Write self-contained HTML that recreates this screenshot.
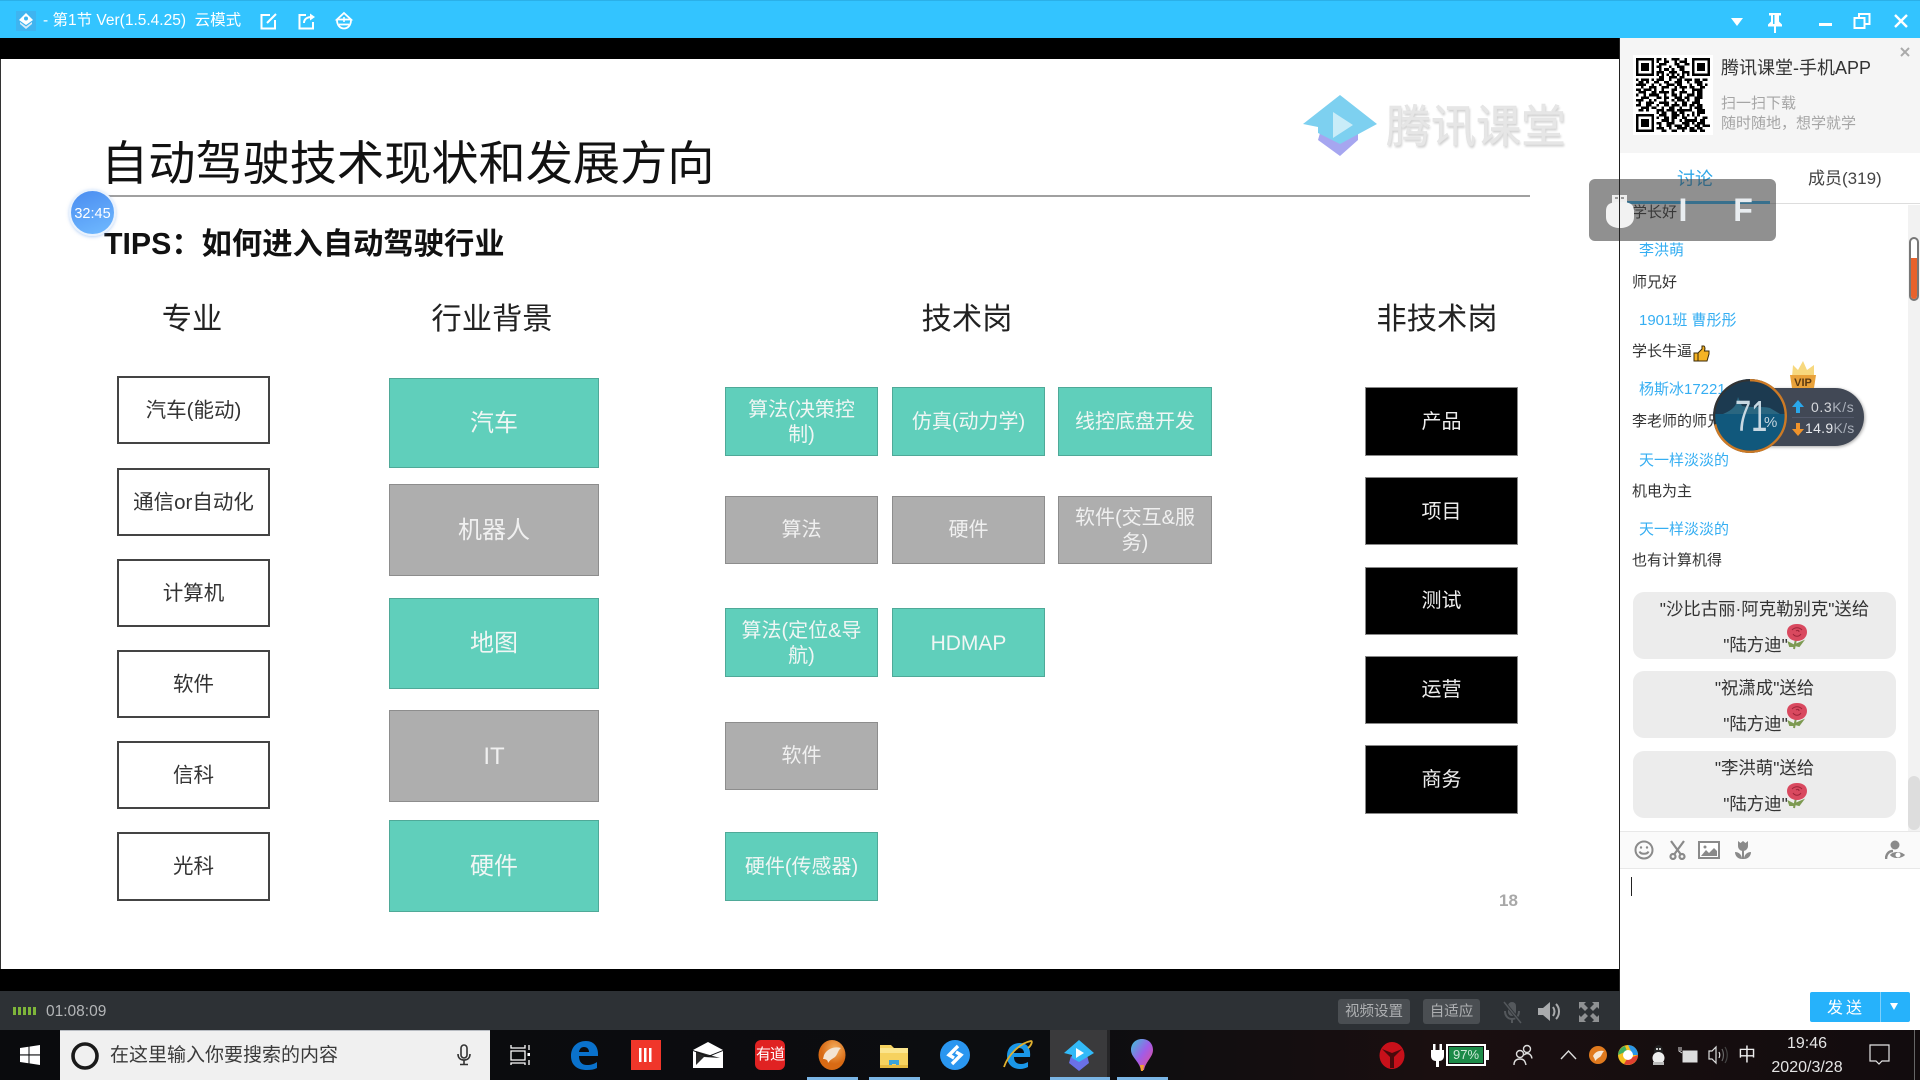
<!DOCTYPE html>
<html lang="zh-CN"><head><meta charset="utf-8"><title>第1节</title>
<style>
html,body{margin:0;padding:0;width:1920px;height:1080px;overflow:hidden;background:#fff}
body{position:relative;font-family:"Liberation Sans","Noto Sans CJK SC",sans-serif}
div,span,svg{position:absolute;box-sizing:border-box}
.n{white-space:nowrap}
.b{display:flex;align-items:center;justify-content:center;text-align:center;font-size:20px;line-height:25px}
.w{background:#fff;border:2px solid #444;color:#333;font-size:20.500px}
.g{background:#60cfbb;border:1px solid #4fa998;color:#f0f6f4;padding-top:2px}
.h{background:#aeaeae;border:1px solid #8d8d8d;color:#f0f0f0;padding-top:1px}
.k{background:#000;border:1px solid #888;color:#eee;padding-top:1px}
.l{font-size:24px;padding-top:0}
.c{font-size:30.300px;color:#222;line-height:40px;top:300px;text-align:center;white-space:nowrap}
.nm{left:1639px;font-size:15px;line-height:20px;color:#35aef2;white-space:nowrap}
.tx{left:1632px;font-size:15px;line-height:20px;color:#333;white-space:nowrap}
.gf{left:1633px;width:263px;height:67px;background:#ececec;border-radius:11px}
.gt{left:0;width:263px;text-align:center;font-size:17.400px;line-height:24px;color:#333;white-space:nowrap}
.ul{top:1077px;height:3px;background:#7ab5e5}
</style></head><body>

<!-- title bar -->
<div style="left:0;top:0;width:1920px;height:38px;background:#33c4ff;border-top:1px solid #2bb0e8"></div>
<svg style="left:16px;top:11px" width="20" height="20" viewBox="0 0 20 20"><rect width="20" height="20" fill="#3fb4f0"/><path d="M10 2l7 7-7 5-7-5z" fill="#fff"/><path d="M4 11l6 4.500 6-4.500v2l-6 5-6-5z" fill="#d8ecf8"/><circle cx="10" cy="7.500" r="2" fill="#3fb4f0"/></svg>
<div class="n" style="left:43px;top:11px;font-size:15.500px;line-height:20px;color:#fff">- 第1节 Ver(1.5.4.25)&nbsp; 云模式</div>
<svg style="left:259px;top:11px" width="20" height="20" viewBox="0 0 20 20" fill="none" stroke="#fff" stroke-width="2"><path d="M11 4H2.500v13.500H16V9"/><path d="M8 12l9-9" stroke-width="2"/></svg>
<svg style="left:297px;top:11px" width="20" height="20" viewBox="0 0 20 20" fill="none" stroke="#fff" stroke-width="2"><path d="M9 4H2.500v13.500H16V11"/><path d="M7 12c0-4 3-6 8-6" /><path d="M13 2.500l5 3.500-5 3.500z" fill="#fff" stroke="none"/></svg>
<svg style="left:334px;top:11px" width="20" height="20" viewBox="0 0 20 20" fill="none" stroke="#fff" stroke-width="1.800"><path d="M10 2l7 6.500H3z"/><path d="M3 9c0 5 3 8.500 7 8.500s7-3.500 7-8.500"/><path d="M5 13.500h10"/><path d="M10 6v5M7.500 8.500h5" stroke-width="1.500"/></svg>
<svg style="left:1729px;top:16px" width="16" height="12" viewBox="0 0 16 12"><path d="M2 2h12l-6 8z" fill="#fff"/></svg>
<svg style="left:1765px;top:11px" width="20" height="24" viewBox="0 0 20 24" fill="#fff"><path d="M4 2h12v2.500h-2v6l3 3v2H3v-2l3-3v-6H4z"/><rect x="9" y="15" width="2" height="7"/><rect x="8" y="4" width="1.500" height="9" fill="#33c4ff"/></svg>
<div style="left:1819px;top:23px;width:13px;height:3px;background:#fff"></div>
<svg style="left:1853px;top:12px" width="18" height="18" viewBox="0 0 18 18" fill="none" stroke="#fff" stroke-width="2"><rect x="1.500" y="6" width="10" height="10"/><path d="M6 6V2h10.500v10H12"/></svg>
<svg style="left:1894px;top:14px" width="14" height="14" viewBox="0 0 14 14" stroke="#fff" stroke-width="2.400"><path d="M1 1l12 12M13 1L1 13"/></svg>

<!-- black bands -->
<div style="left:0;top:38px;width:1620px;height:21px;background:#000"></div>
<div style="left:0;top:969px;width:1620px;height:22px;background:#000"></div>
<div style="left:0;top:59px;width:1px;height:910px;background:#333"></div>

<!-- slide -->
<div style="left:0;top:0;width:1619px;height:969px;filter:blur(.35px)">
<div class="n" style="left:101px;top:132px;font-size:47.200px;line-height:66px;color:#111">自动驾驶技术现状和发展方向</div>
<div style="left:104px;top:195px;width:1426px;height:2px;background:#a0a0a0"></div>
<div class="n" style="left:104px;top:223px;font-size:30.300px;line-height:44px;font-weight:700;color:#111">TIPS：如何进入自动驾驶行业</div>

<!-- watermark -->
<svg style="left:1302px;top:94px" width="76" height="64" viewBox="0 0 76 64"><path d="M38 62L16 46l4-14 18 10 18-12v16z" fill="#a6a6f0"/><path d="M38 1l37 29-37 20-22-11v-6L1 30z" fill="#7dd0f0"/><path d="M31 18l20 13-20 13z" fill="#c9ecf8"/></svg>
<div class="n" style="left:1386px;top:94px;font-size:45px;line-height:66px;color:#e6e6e6;-webkit-text-stroke:.4px #e2e2e2;text-shadow:1px 2px 2px #cfcfcf">腾讯课堂</div>

<!-- headers -->
<div class="c" style="left:92px;width:200px">专业</div>
<div class="c" style="left:392px;width:200px">行业背景</div>
<div class="c" style="left:867px;width:200px">技术岗</div>
<div class="c" style="left:1337px;width:200px">非技术岗</div>

<!-- col1 -->
<div class="b w" style="left:117px;top:376px;width:153px;height:68px">汽车(能动)</div>
<div class="b w" style="left:117px;top:468px;width:153px;height:68px">通信or自动化</div>
<div class="b w" style="left:117px;top:559px;width:153px;height:68px">计算机</div>
<div class="b w" style="left:117px;top:650px;width:153px;height:68px">软件</div>
<div class="b w" style="left:117px;top:741px;width:153px;height:68px">信科</div>
<div class="b w" style="left:117px;top:832px;width:153px;height:69px">光科</div>

<!-- col2 -->
<div class="b g l" style="left:389px;top:378px;width:210px;height:90px">汽车</div>
<div class="b h l" style="left:389px;top:484px;width:210px;height:92px">机器人</div>
<div class="b g l" style="left:389px;top:598px;width:210px;height:91px">地图</div>
<div class="b h l" style="left:389px;top:710px;width:210px;height:92px">IT</div>
<div class="b g l" style="left:389px;top:820px;width:210px;height:92px">硬件</div>

<!-- col3 -->
<div class="b g" style="left:725px;top:387px;width:153px;height:69px;padding-left:12px;padding-right:12px">算法(决策控制)</div>
<div class="b g" style="left:892px;top:387px;width:153px;height:69px">仿真(动力学)</div>
<div class="b g" style="left:1058px;top:387px;width:154px;height:69px">线控底盘开发</div>
<div class="b h" style="left:725px;top:496px;width:153px;height:68px">算法</div>
<div class="b h" style="left:892px;top:496px;width:153px;height:68px">硬件</div>
<div class="b h" style="left:1058px;top:496px;width:154px;height:68px;padding-left:12px;padding-right:12px">软件(交互&amp;服务)</div>
<div class="b g" style="left:725px;top:608px;width:153px;height:69px;padding-left:4px;padding-right:4px">算法(定位&amp;导航)</div>
<div class="b g" style="left:892px;top:608px;width:153px;height:69px;font-size:21px">HDMAP</div>
<div class="b h" style="left:725px;top:722px;width:153px;height:68px">软件</div>
<div class="b g" style="left:725px;top:832px;width:153px;height:69px">硬件(传感器)</div>

<!-- col4 -->
<div class="b k" style="left:1365px;top:387px;width:153px;height:69px">产品</div>
<div class="b k" style="left:1365px;top:477px;width:153px;height:68px;padding-top:2px">项目</div>
<div class="b k" style="left:1365px;top:567px;width:153px;height:68px">测试</div>
<div class="b k" style="left:1365px;top:656px;width:153px;height:68px">运营</div>
<div class="b k" style="left:1365px;top:745px;width:153px;height:69px">商务</div>
<div class="n" style="left:1499px;top:891px;font-size:17px;line-height:20px;font-weight:700;color:#a8a8a8">18</div>
</div>

<!-- timer bubble -->
<div style="left:69px;top:189px;width:47px;height:47px;border-radius:50%;background:linear-gradient(160deg,#4a8cf0,#70baff);border:2px solid #e9f2fd;box-shadow:0 1px 3px rgba(120,170,240,.5)"></div>
<div class="n" style="left:69px;top:205px;width:47px;text-align:center;font-size:14.500px;line-height:18px;color:#fff">32:45</div>

<!-- sidebar -->
<div style="left:1619px;top:38px;width:1px;height:953px;background:#222"></div>
<div style="left:1620px;top:38px;width:300px;height:115px;background:#f5f5f5"></div>
<div style="left:1633px;top:55px;width:80px;height:80px;background:#fff"></div>
<svg style="left:1636px;top:58px" width="74" height="74" viewBox="0 0 29 29" shape-rendering="crispEdges"><path fill="#000" d="M0 0h7v7H0zM1 1v5h5V1zM2 2h3v3H2zM22 0h7v7h-7zM23 1v5h5V1zM24 2h3v3h-3zM0 22h7v7H0zM1 23v5h5v-5zM2 24h3v3H2z" fill-rule="evenodd"/><path stroke="#000" stroke-width="1" d="M8 .5h2m1 0h1m2 0h3m2 0h1M8 1.500h1m2 0h2m2 0h1m1 0h3M9 2.500h3m3 0h2m2 0h2M8 3.500h2m3 0h1m2 0h3M9 4.500h1m1 0h2m1 0h1m2 0h2M8 5.500h3m2 0h3m2 0h3M8 6.500h1m1 0h1m1 0h1m1 0h1m1 0h1m1 0h1m1 0h1M9 7.500h2m2 0h3m1 0h2M0 8.500h1m1 0h3m1 0h1m1 0h3m2 0h1m2 0h2m1 0h3m1 0h2m1 0h2M1 9.500h2m1 0h1m2 0h2m2 0h2m2 0h3m2 0h1m2 0h3M0 10.500h4m2 0h1m2 0h1m2 0h3m1 0h2m3 0h1m2 0h2m1 0h1M2 11.500h1m2 0h3m2 0h3m2 0h1m1 0h3m1 0h2m2 0h2M0 12.500h2m1 0h3m1 0h1m2 0h1m3 0h2m2 0h1m3 0h4M1 13.500h3m2 0h2m1 0h4m1 0h1m2 0h3m2 0h1m1 0h2M0 14.500h1m2 0h1m1 0h4m2 0h1m2 0h2m1 0h1m2 0h3m1 0h2M2 15.500h3m3 0h2m1 0h2m2 0h3m1 0h2m2 0h3M0 16.500h3m2 0h1m1 0h1m3 0h1m2 0h1m1 0h3m1 0h1m2 0h2M1 17.500h1m2 0h3m2 0h4m2 0h1m2 0h2m2 0h3M0 18.500h2m2 0h2m2 0h1m2 0h2m1 0h3m1 0h2m1 0h2m1 0h2M2 19.500h3m1 0h2m2 0h1m2 0h2m2 0h1m3 0h1m1 0h3M1 20.500h2m1 0h1m3 0h3m1 0h3m1 0h6m2 0h3M8 21.500h1m1 0h2m2 0h2m1 0h2m3 0h1m1 0h3M9 22.500h3m2 0h3m1 0h1m1 0h1m1 0h1m1 0h1M8 23.500h1m2 0h2m1 0h2m2 0h2m3 0h1m2 0h2M10 24.500h3m1 0h1m2 0h1m1 0h5m1 0h2M8 25.500h2m2 0h3m3 0h3m1 0h1m1 0h3M9 26.500h1m2 0h2m1 0h3m1 0h2m2 0h2m1 0h3M8 27.500h3m2 0h1m2 0h4m1 0h2m1 0h2M10 28.500h2m2 0h2m2 0h1m2 0h3m1 0h2"/></svg>
<div class="n" style="left:1721px;top:55px;font-size:18px;line-height:26px;color:#333">腾讯课堂-手机APP</div>
<div class="n" style="left:1721px;top:94px;font-size:15px;line-height:20px;color:#a5a5a5">扫一扫下载</div>
<div class="n" style="left:1721px;top:114px;font-size:15px;line-height:20px;color:#a5a5a5">随时随地，想学就学</div>
<svg style="left:1900px;top:47px" width="10" height="10" viewBox="0 0 10 10" stroke="#aaa" stroke-width="2"><path d="M1 1l8 8M9 1L1 9"/></svg>

<!-- tabs -->
<div class="n" style="left:1677px;top:166px;font-size:18px;line-height:26px;color:#2ea7e8">讨论</div>
<div class="n" style="left:1808px;top:166px;font-size:17px;line-height:26px;color:#444">成员(319)</div>
<div style="left:1620px;top:203px;width:300px;height:1px;background:#ddd"></div>
<div style="left:1620px;top:201px;width:150px;height:3px;background:#33b6f8"></div>

<!-- chat -->
<div class="tx" style="top:203px">学长好</div>
<div class="nm" style="top:241px">李洪萌</div>
<div class="tx" style="top:273px">师兄好</div>
<div class="nm" style="top:311px">1901班 曹彤彤</div>
<div class="tx" style="top:342px">学长牛逼</div>
<svg style="left:1693px;top:345px" width="17" height="17" viewBox="0 0 17 17"><path d="M1 8h4v8H1zM5 8l4-4V1h2c1.500 1 1 3 .5 5H16v3l-2 7H5z" fill="#f5b324" stroke="#3a2a08" stroke-width="1"/></svg>
<div class="nm" style="top:380px">杨斯冰17221</div>
<div class="tx" style="top:412px">李老师的师兄</div>
<div class="nm" style="top:451px">天一样淡淡的</div>
<div class="tx" style="top:482px">机电为主</div>
<div class="nm" style="top:520px">天一样淡淡的</div>
<div class="tx" style="top:551px">也有计算机得</div>

<!-- gifts -->
<div class="gf" style="top:592px"><div class="gt" style="top:5px">"沙比古丽·阿克勒别克"送给</div><div class="gt" style="top:41px">"陆方迪"<span style="position:static;display:inline-block;width:18px"></span></div></div>
<div class="gf" style="top:671px"><div class="gt" style="top:5px">"祝潇成"送给</div><div class="gt" style="top:41px">"陆方迪"<span style="position:static;display:inline-block;width:18px"></span></div></div>
<div class="gf" style="top:751px"><div class="gt" style="top:5px">"李洪萌"送给</div><div class="gt" style="top:41px">"陆方迪"<span style="position:static;display:inline-block;width:18px"></span></div></div>
<svg style="left:1787px;top:624px" width="20" height="26" viewBox="0 0 20 26"><path d="M9 15l-2 10M8 21l7-3-3 4zM8 22l-6-3 1 3z" stroke="#7d9a52" stroke-width="2" fill="#7d9a52"/><path d="M10 0c6 0 10 3 10 8s-4 9-10 9S0 13 0 8s4-8 10-8z" fill="#d9495f"/><path d="M5 6c3-3 7-3 10 0M6 10c2 3 6 3 8 0M9 7c1-1 3-1 3 1" stroke="#9c2438" fill="none"/></svg>
<svg style="left:1787px;top:703px" width="20" height="26" viewBox="0 0 20 26"><path d="M9 15l-2 10M8 21l7-3-3 4zM8 22l-6-3 1 3z" stroke="#7d9a52" stroke-width="2" fill="#7d9a52"/><path d="M10 0c6 0 10 3 10 8s-4 9-10 9S0 13 0 8s4-8 10-8z" fill="#d9495f"/><path d="M5 6c3-3 7-3 10 0M6 10c2 3 6 3 8 0M9 7c1-1 3-1 3 1" stroke="#9c2438" fill="none"/></svg>
<svg style="left:1787px;top:783px" width="20" height="26" viewBox="0 0 20 26"><path d="M9 15l-2 10M8 21l7-3-3 4zM8 22l-6-3 1 3z" stroke="#7d9a52" stroke-width="2" fill="#7d9a52"/><path d="M10 0c6 0 10 3 10 8s-4 9-10 9S0 13 0 8s4-8 10-8z" fill="#d9495f"/><path d="M5 6c3-3 7-3 10 0M6 10c2 3 6 3 8 0M9 7c1-1 3-1 3 1" stroke="#9c2438" fill="none"/></svg>

<!-- scrollbars -->
<div style="left:1908px;top:205px;width:12px;height:626px;background:#f2f2f2"></div>
<div style="left:1908px;top:776px;width:12px;height:54px;background:#ddd;border-radius:6px"></div>
<div style="left:1909px;top:237px;width:10px;height:64px;background:#fff;border:2px solid #777;border-radius:5px"></div>
<div style="left:1911px;top:258px;width:6px;height:41px;background:#e8622c;border-radius:0 0 3px 3px"></div>

<!-- toolbar -->
<div style="left:1620px;top:831px;width:300px;height:38px;background:#fafafa;border-top:1px solid #e8e8e8;border-bottom:1px solid #e8e8e8"></div>
<svg style="left:1634px;top:840px" width="20" height="20" viewBox="0 0 20 20" fill="none" stroke="#8a8a8a" stroke-width="2"><circle cx="10" cy="10" r="8.500"/><path d="M5.500 11.500c1 3 8 3 9 0"/><circle cx="7" cy="7.500" r="1.200" fill="#8a8a8a" stroke="none"/><circle cx="13" cy="7.500" r="1.200" fill="#8a8a8a" stroke="none"/></svg>
<svg style="left:1669px;top:840px" width="17" height="20" viewBox="0 0 17 20" fill="none" stroke="#8a8a8a" stroke-width="2.200"><path d="M2 1l9.500 13M15 1L5.500 14"/><circle cx="4" cy="16.500" r="2.500"/><circle cx="13" cy="16.500" r="2.500"/></svg>
<svg style="left:1698px;top:841px" width="22" height="18" viewBox="0 0 22 18"><rect x="1" y="1" width="20" height="16" fill="#fff" stroke="#8a8a8a" stroke-width="2"/><path d="M3 15l5-6 3 3 5-5 3 3v5z" fill="#8a8a8a"/><circle cx="7" cy="6" r="1.500" fill="#8a8a8a"/></svg>
<svg style="left:1735px;top:840px" width="16" height="20" viewBox="0 0 16 20" fill="#8a8a8a"><path d="M3 1l2.500 2L8 1l2.500 2L13 1v5c0 3-2.500 5-5 5S3 9 3 6z"/><rect x="7" y="10" width="2" height="9"/><path d="M0 12c4 0 7 3 7 7-4 0-7-3-7-7zM16 12c-4 0-7 3-7 7 4 0 7-3 7-7z"/></svg>
<svg style="left:1885px;top:840px" width="21" height="20" viewBox="0 0 21 20"><circle cx="10" cy="5" r="4.500" fill="#8a8a8a"/><path d="M1 19c0-5 3-8 7-8" stroke="#8a8a8a" stroke-width="2.500" fill="none"/><path d="M5 15c3-4 11-4 15 0-4 4-12 4-15 0z" fill="#8a8a8a"/><circle cx="13" cy="15" r="2.500" fill="#fff"/></svg>
<div style="left:1631px;top:877px;width:1px;height:19px;background:#222"></div>

<!-- send -->
<div style="left:1810px;top:992px;width:100px;height:30px;background:#26b2fb;border-radius:2px"></div>
<div class="n" style="left:1811px;top:999px;width:70px;text-align:center;font-size:16px;line-height:20px;color:#fff;letter-spacing:3px">发送</div>
<div style="left:1880px;top:992px;width:1px;height:30px;background:#7fd0fb"></div>
<svg style="left:1890px;top:1003px" width="8" height="7" viewBox="0 0 8 7"><path d="M0 0h8L4 7z" fill="#fff"/></svg>

<!-- gray overlay -->
<div style="left:1589px;top:179px;width:187px;height:62px;background:rgba(60,60,60,.57);border-radius:6px"></div>
<svg style="left:1605px;top:193px" width="30" height="36" viewBox="0 0 30 36"><path d="M7 2h15v8H7z" fill="#eee"/><path d="M10 4h3v2h-3zM16 4h3v2h-3z" fill="#999"/><path d="M1 18C1 10 7 9 15 9s14 1 14 9v6c0 7-6 11-14 11S1 31 1 24z" fill="#f2f2f2"/></svg>
<div style="left:1619px;top:179px;width:1px;height:62px;background:#222"></div>
<div class="n" style="left:1673px;top:190px;width:20px;text-align:center;font-size:32px;line-height:40px;font-weight:700;color:#e9edf0">I</div>
<div class="n" style="left:1733px;top:190px;width:20px;text-align:center;font-size:32px;line-height:40px;font-weight:700;color:#e9edf0">F</div>

<!-- net widget -->
<div style="left:1750px;top:388px;width:114px;height:58px;background:#414855;border-radius:0 29px 29px 0;box-shadow:1px 1px 3px rgba(0,0,0,.35)"></div>
<div style="left:1792px;top:417px;width:62px;height:1px;background:#53596a"></div>
<svg style="left:1712px;top:378px" width="76" height="76" viewBox="0 0 76 76"><circle cx="38" cy="38" r="37" fill="#1c3a50"/><path d="M1.500 36h73a36.500 36.500 0 0 1-73 0z" fill="#11587c"/><path d="M11 36c7-3 11-6 13-10l2-7 4 9c10 2 20 0 28 2l10 6z" fill="#2a6680"/><circle cx="38" cy="38" r="35.800" fill="none" stroke="#333" stroke-width="2" /><circle cx="38" cy="38" r="35.800" fill="none" stroke="#cc7a26" stroke-width="2.400" stroke-dasharray="160 65" transform="rotate(-90 38 38)"/></svg>
<div class="n" style="left:1735px;top:392px;font-size:44px;line-height:50px;color:#c8d8e2;transform:scaleX(.66);transform-origin:left">71</div>
<div class="n" style="left:1764px;top:413px;font-size:15px;line-height:20px;color:#c4d4de">%</div>
<svg style="left:1791px;top:400px" width="14" height="13" viewBox="0 0 14 13"><path d="M7 0l6 7H9v6H5V7H1z" fill="#2aa7ea"/></svg>
<svg style="left:1791px;top:423px" width="14" height="13" viewBox="0 0 14 13"><path d="M7 13L1 6h4V0h4v6h4z" fill="#f0932b"/></svg>
<div class="n" style="left:1811px;top:397px;width:42px;text-align:right;font-size:14px;line-height:20px;color:#d6d8dc;letter-spacing:.6px">0.3<span style="position:static;color:#aab0ba">K/s</span></div>
<div class="n" style="left:1805px;top:418px;width:48px;text-align:right;font-size:14px;line-height:20px;color:#e6e8ec;letter-spacing:.3px">14.9<span style="position:static;color:#aab0ba">K/s</span></div>
<svg style="left:1788px;top:360px" width="30" height="29" viewBox="0 0 30 29"><path d="M4 17L5 5l5 5 5-9 4 9 7-5v12z" fill="#f7d87e"/><path d="M2 15h26l-2 13H4z" fill="#e9a23a"/><text x="15" y="26" font-size="11" font-weight="700" text-anchor="middle" fill="#5b3a12" font-family="Liberation Sans,sans-serif">VIP</text></svg>

<!-- control bar -->
<div style="left:0;top:991px;width:1620px;height:39px;background:#2d3135"></div>
<svg style="left:13px;top:1007px" width="23" height="8" viewBox="0 0 23 8" fill="#7eb53a"><rect x="0" width="3" height="8"/><rect x="5" width="3" height="8"/><rect x="10" width="3" height="8"/><rect x="15" width="3" height="8"/><rect x="20" width="3" height="8"/></svg>
<div class="n" style="left:46px;top:1002px;font-size:15.500px;line-height:20px;color:#b4b6b8">01:08:09</div>
<div class="n" style="left:1338px;top:999px;width:72px;height:25px;background:#4a4e52;border-radius:3px;text-align:center;font-size:14.500px;line-height:26px;color:#aeb0b2">视频设置</div>
<div class="n" style="left:1423px;top:999px;width:57px;height:25px;background:#4a4e52;border-radius:3px;text-align:center;font-size:14.500px;line-height:26px;color:#aeb0b2">自适应</div>
<svg style="left:1500px;top:1000px" width="24" height="24" viewBox="0 0 24 24" fill="#54585c"><rect x="8" y="2" width="8" height="14" rx="4"/><path d="M5 11c0 5 3 8 7 8s7-3 7-8" fill="none" stroke="#54585c" stroke-width="2"/><rect x="11" y="18" width="2" height="5"/><path d="M4 2l17 21" stroke="#2d3135" stroke-width="3"/><path d="M4 2l17 21" stroke="#54585c" stroke-width="1.500"/></svg>
<svg style="left:1537px;top:1000px" width="26" height="23" viewBox="0 0 26 23" fill="none" stroke="#a9abad" stroke-width="2"><path d="M1 8h5l7-6v19l-7-6H1z" fill="#a9abad" stroke="none"/><path d="M16 7c2 3 2 6 0 9M19 4c4 4 4 11 0 15"/></svg>
<svg style="left:1579px;top:1002px" width="20" height="20" viewBox="0 0 20 20" fill="#8f9193"><path d="M0 0h7L5 2l4 4-3 3-4-4-2 2zM20 0v7l-2-2-4 4-3-3 4-4-2-2zM0 20v-7l2 2 4-4 3 3-4 4 2 2zM20 20h-7l2-2-4-4 3-3 4 4 2-2z"/></svg>

<!-- taskbar -->
<div style="left:0;top:1030px;width:1920px;height:50px;background:linear-gradient(90deg,#0a0b0d 0%,#0c0d10 55%,#1a0f10 75%,#120c0e 100%)"></div>
<svg style="left:20px;top:1045px" width="20" height="20" viewBox="0 0 20 20" fill="#fff"><path d="M0 3l8.500-1.200v7.600H0zM9.500 1.600L20 0v9.400H9.500zM0 10.500h8.500v7.700L0 17zM9.500 10.500H20V20L9.500 18.400z"/></svg>
<div style="left:60px;top:1030px;width:430px;height:50px;background:#f0f0f0;border-top:1px solid #b8bcc2"></div>
<svg style="left:70px;top:1041px" width="30" height="30" viewBox="0 0 30 30"><circle cx="15" cy="15" r="12" fill="none" stroke="#1a1a1a" stroke-width="3.600"/></svg>
<div class="n" style="left:110px;top:1042px;font-size:19px;line-height:27px;color:#3a3a3a">在这里输入你要搜索的内容</div>
<svg style="left:457px;top:1044px" width="14" height="22" viewBox="0 0 14 22" fill="none" stroke="#333" stroke-width="1.600"><rect x="4" y="1" width="6" height="13" rx="3"/><path d="M1 10c0 4 2.500 6 6 6s6-2 6-6M7 16v4M3 20.500h8"/></svg>
<svg style="left:510px;top:1045px" width="20" height="20" viewBox="0 0 20 20" fill="none" stroke="#fff" stroke-width="1.300"><path d="M1 0v3h14V0M1 6h14v9H1zM1 20v-2h14v2"/><path d="M19 0v5M19 15v5"/><rect x="17.500" y="8" width="3" height="3" fill="#fff" stroke="none"/></svg>
<svg style="left:571px;top:1041px" width="27" height="29" viewBox="0 0 27 29"><path d="M27 15H8c0 6 3 9 8 9 4 0 7-1 10-3v6c-3 1.500-6 2-10 2C6 29 0 24 0 15 0 6 6 0 15 0c8 0 12 6 12 13zM8 11h10c0-3-2-5-5-5-3 0-4.500 2-5 5z" fill="#0a72cc"/></svg>
<div style="left:631px;top:1040px;width:30px;height:30px;background:#f0362a"></div>
<svg style="left:639px;top:1048px" width="14" height="14" viewBox="0 0 14 14" fill="#fff"><rect x="0" width="2.500" height="14"/><rect x="5" width="2.500" height="14"/><rect x="10" width="2.500" height="14"/></svg>
<svg style="left:693px;top:1042px" width="30" height="26" viewBox="0 0 30 26"><path d="M0 8L15 0l15 8v0L15 14z" fill="#fff"/><path d="M0 9v17h30V9L15 15z" fill="#fff"/><path d="M3 9l24 7-16-1-8 8z" fill="#111" opacity=".9"/></svg>
<div class="n" style="left:755px;top:1040px;width:30px;height:30px;background:#e02222;border-radius:6px;text-align:center;font-size:15px;line-height:30px;color:#fff;letter-spacing:-1px">有道</div>
<svg style="left:818px;top:1040px" width="28" height="30" viewBox="0 0 28 30"><defs><radialGradient id="fx" cx=".6" cy=".3"><stop offset="0" stop-color="#f5b060"/><stop offset="1" stop-color="#d86a14"/></radialGradient></defs><ellipse cx="14" cy="15" rx="13.500" ry="15" fill="url(#fx)"/><path d="M6 15c3-6 10-9 17-7-3 2-3 6-6 9-3 2-5 3-7 6 0-3-2-4-5-4z" fill="#f3e4d2"/></svg>
<svg style="left:880px;top:1043px" width="28" height="25" viewBox="0 0 28 25"><path d="M0 2h11l3 3h14v20H0z" fill="#f6d25f"/><path d="M0 5h28v5H0z" fill="#fbe58d"/><path d="M9 25v-8h10v8h-3v-4h-4v4z" fill="#3aa3da"/><path d="M0 22h28v3H0z" fill="#e5b93f"/></svg>
<svg style="left:940px;top:1040px" width="30" height="30" viewBox="0 0 30 30"><circle cx="15" cy="15" r="15" fill="#2a96f0"/><path d="M18 6l-9 9 5 3M12 24l9-9-5-3" fill="none" stroke="#fff" stroke-width="3.400"/></svg>
<svg style="left:1003px;top:1039px" width="30" height="32" viewBox="0 0 30 32"><path d="M27 18H11c0 5 3 7 7 7 3 0 5-1 7-2v5c-2 1-5 2-8 2C9 30 4 25 4 17 4 9 9 4 17 4c7 0 11 5 10 14zM11 14h10c0-3-2-5-5-5s-5 2-5 5z" fill="#1a97e8"/><path d="M1 28C5 16 17 4 28 2c2 0 0 5-3 7" fill="none" stroke="#e0b030" stroke-width="1.800"/></svg>
<div style="left:1050px;top:1030px;width:57px;height:50px;background:#3a3a3c"></div>
<div style="left:1107px;top:1030px;width:3px;height:50px;background:#262628"></div>
<svg style="left:1064px;top:1040px" width="30" height="31" viewBox="0 0 30 31"><path d="M15 31L5 23l2-7 8 5 8-6 2 8z" fill="#6a70e8"/><path d="M15 0l15 13-15 9-7-4v-3L0 13z" fill="#32baf8"/><path d="M12 8l8 5-8 5z" fill="#fff"/></svg>
<svg style="left:1130px;top:1039px" width="24" height="32" viewBox="0 0 24 32"><defs><linearGradient id="pg" x1="0" y1="0" x2="1" y2="1"><stop offset="0" stop-color="#39c5d8"/><stop offset=".5" stop-color="#a05de8"/><stop offset="1" stop-color="#f04a8a"/></linearGradient></defs><path d="M12 0c7 0 11 5 11 11 0 7-7 11-9 20h-3C9 22 1 18 1 11 1 5 5 0 12 0z" fill="url(#pg)"/><path d="M10 26h4l-1 6h-2z" fill="#f0a030"/></svg>
<div class="ul" style="left:807px;width:51px"></div>
<div class="ul" style="left:869px;width:51px"></div>
<div class="ul" style="left:1050px;width:60px"></div>
<div class="ul" style="left:1117px;width:51px"></div>

<!-- tray -->
<svg style="left:1379px;top:1042px" width="26" height="27" viewBox="0 0 26 27"><ellipse cx="13" cy="13.500" rx="12.500" ry="13.500" fill="#c8101a"/><path d="M3 7l10 4 10-4-8 8v11h-4V15z" fill="#4a0a0c"/></svg>
<svg style="left:1431px;top:1044px" width="13" height="23" viewBox="0 0 13 23" fill="#fff"><rect x="2" y="0" width="2.500" height="6"/><rect x="8.500" y="0" width="2.500" height="6"/><path d="M0 6h13v6c0 3-2 5-5 5v6H5v-6c-3 0-5-2-5-5z"/></svg>
<div style="left:1446px;top:1044px;width:40px;height:22px;border:2px solid #fff;background:#1c8a48;box-shadow:inset 0 0 0 1px #111"></div>
<div style="left:1486px;top:1050px;width:3px;height:10px;background:#fff"></div>
<div class="n" style="left:1446px;top:1045px;width:40px;text-align:center;font-size:13px;line-height:20px;color:#cfe8d8">97%</div>
<svg style="left:1513px;top:1044px" width="20" height="22" viewBox="0 0 20 22" fill="none" stroke="#ddd" stroke-width="1.400"><circle cx="7" cy="10" r="3.500"/><path d="M1 21c0-4 2-6 6-6s5 2 6 6"/><circle cx="14" cy="5" r="3.500"/><path d="M11 11c1-1 2-1.500 3-1.500 3 0 4.500 2 5 5"/></svg>
<svg style="left:1560px;top:1049px" width="17" height="11" viewBox="0 0 17 11" fill="none" stroke="#ddd" stroke-width="1.400"><path d="M1 10l7.500-8L16 10"/></svg>
<svg style="left:1589px;top:1046px" width="18" height="18" viewBox="0 0 18 18"><circle cx="9" cy="9" r="9" fill="#e07a1e"/><path d="M4 10c2-4 6-6 11-5-2 2-2 4-4 6-2 1-3 2-5 4 0-2-1-3-2-5z" fill="#f5e8d8"/></svg>
<svg style="left:1618px;top:1045px" width="20" height="20" viewBox="0 0 20 20"><circle cx="10" cy="10" r="10" fill="#f5c020"/><path d="M10 0a10 10 0 0 1 10 10h-5z" fill="#2a96e8"/><path d="M20 10a10 10 0 0 1-14 9l3-5z" fill="#e04030"/><path d="M0 10a10 10 0 0 1 7-9l2 5z" fill="#40b060"/><circle cx="10" cy="10" r="5" fill="#fff"/></svg>
<svg style="left:1651px;top:1044px" width="15" height="22" viewBox="0 0 15 22"><ellipse cx="7.500" cy="7" rx="4.500" ry="6" fill="#222"/><ellipse cx="7.500" cy="14" rx="6" ry="6" fill="#eee"/><path d="M2 18h11v3H2z" fill="#bbb"/><circle cx="6" cy="5" r="1" fill="#fff"/><circle cx="9" cy="5" r="1" fill="#fff"/></svg>
<svg style="left:1678px;top:1046px" width="20" height="18" viewBox="0 0 20 18"><rect x="5" y="5" width="14" height="11" fill="#ddd" stroke="#ddd"/><path d="M1 1v4l3 2M3 1v4" stroke="#ddd" fill="none"/></svg>
<svg style="left:1708px;top:1045px" width="20" height="20" viewBox="0 0 20 20" fill="none" stroke="#ddd" stroke-width="1.200"><path d="M1 6h3l4-4v16l-4-4H1z"/><path d="M11 7c1 2 1 4 0 6" /><path d="M14 4c2 4 2 8 0 12" stroke="#666"/><path d="M17 2c3 5 3 11 0 16" stroke="#444"/></svg>
<div class="n" style="left:1738px;top:1043px;font-size:18px;line-height:24px;color:#ededed">中</div>
<div class="n" style="left:1757px;top:1034px;width:100px;text-align:center;font-size:16px;line-height:20px;color:#e4e4e4">19:46</div>
<div class="n" style="left:1757px;top:1058px;width:100px;text-align:center;font-size:16px;line-height:20px;color:#e4e4e4">2020/3/28</div>
<svg style="left:1869px;top:1044px" width="21" height="22" viewBox="0 0 21 22" fill="none" stroke="#e4e4e4" stroke-width="1.200"><path d="M1 1h19v16h-7l-3 3-3-3H1z"/></svg>
<div style="left:1914px;top:1030px;width:1px;height:50px;background:#666"></div>
</body></html>
